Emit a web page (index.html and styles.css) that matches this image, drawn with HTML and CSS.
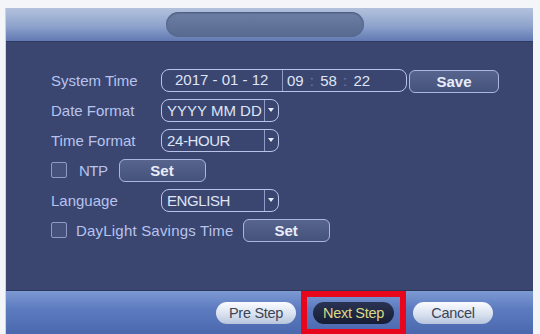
FILE: index.html
```html
<!DOCTYPE html>
<html lang="en">
<head>
    <meta charset="UTF-8">
    <meta name="viewport" content="width=device-width, initial-scale=1.0">
    <title>wizard - general</title>
    <link rel="stylesheet" href="styles.css">
</head>
<body>
    <div class="window">
        <div class="win_header">
            <div class="title_pill"></div>
        </div>
        <div class="win_body">
            <div class="row">
                <span class="label">System Time</span>
                <div class="field field_time">
                    <span class="date_part">2017 - 01 - 12</span>
                    <span class="time_part">09 <i>:</i> 58 <i>:</i> 22</span>
                </div>
                <span class="btn btn_save">Save</span>
            </div>
            <div class="row">
                <span class="label">Date Format</span>
                <div class="field select">
                    <span class="value wide">YYYY MM DD</span>
                    <span class="arrow"></span>
                </div>
            </div>
            <div class="row">
                <span class="label">Time Format</span>
                <div class="field select">
                    <span class="value">24-HOUR</span>
                    <span class="arrow"></span>
                </div>
            </div>
            <div class="row">
                <span class="check"></span>
                <span class="check_label">NTP</span>
                <span class="btn btn_set btn_ntp">Set</span>
            </div>
            <div class="row">
                <span class="label">Language</span>
                <div class="field select">
                    <span class="value">ENGLISH</span>
                    <span class="arrow"></span>
                </div>
            </div>
            <div class="row row_dst">
                <span class="check"></span>
                <span class="check_label">DayLight Savings Time</span>
                <span class="btn btn_set btn_dst">Set</span>
            </div>
        </div>
        <div class="win_footer">
            <span class="pill">Pre Step</span>
            <span class="highlight"><span class="pill pill_dark">Next Step</span></span>
            <span class="pill">Cancel</span>
        </div>
    </div>
</body>
</html>
```

FILE: styles.css
```css
*{
    padding: 0;
    margin: 0;
    box-sizing: border-box;
}

body{
    width: 540px;
    height: 334px;
    overflow: hidden;
    background: #f4f5f8;
    font-family: "Liberation Sans", Arial, sans-serif;
    font-size: 15px;
}

.window{
    margin: 8px 0 0 5px;
    width: 528px;
    height: 340px;
    display: flex;
    flex-direction: column;
    border-left: 1px solid #c9d3e6;
    background: #3b4670;
}

.win_header{
    height: 34px;
    display: flex;
    justify-content: center;
    align-items: center;
    background: linear-gradient(#b3c1dc, #8ea3cc 55%, #6279b3);
    border-bottom: 1px solid #2e3a63;
}

.title_pill{
    width: 198px;
    height: 25px;
    border-radius: 13px;
    background: linear-gradient(#6e7fa4, #56698f);
    box-shadow: inset 0 1px 2px #45557a;
    margin-left: -10px;
}

.win_body{
    height: 248px;
    padding: 27px 0 0 45px;
    display: flex;
    flex-direction: column;
    gap: 8px;
    background: #3a4670;
    color: #b8c3ee;
}

.row{
    display: flex;
    align-items: center;
    height: 22px;
}

.label{
    width: 110px;
}

.field{
    height: 23px;
    border: 1.5px solid #b9c3e9;
    border-radius: 8px;
    display: flex;
    align-items: center;
    color: #dfe4f7;
    overflow: hidden;
}

.field_time{
    width: 246px;
}

.date_part{
    width: 121px;
    padding-left: 13px;
    border-right: 1px solid #8f9bc8;
    height: 100%;
    line-height: 20px;
    white-space: nowrap;
}

.time_part{
    padding-left: 4px;
    white-space: nowrap;
}

.time_part i{
    font-style: normal;
    color: #6f7ba6;
    margin: 0 2px;
}

.select{
    width: 118px;
}

.select .value{
    flex: 1;
    padding-left: 5px;
    white-space: nowrap;
    overflow: hidden;
    letter-spacing: -0.4px;
}

.select .value.wide{
    letter-spacing: 0;
}

.select .arrow{
    width: 14px;
    flex: none;
    height: 100%;
    border-left: 1px solid #8f9bc8;
    position: relative;
}

.select .arrow::after{
    content: '';
    position: absolute;
    left: 3px;
    top: 8px;
    border-left: 3.5px solid transparent;
    border-right: 3.5px solid transparent;
    border-top: 4px solid #e6eaf8;
}

.btn{
    height: 23px;
    border: 1.5px solid #aab6e0;
    border-radius: 6px;
    background: linear-gradient(#56648e, #45527c);
    color: #e9ecf8;
    font-weight: bold;
    display: flex;
    align-items: center;
    justify-content: center;
}

.btn_save{
    width: 90px;
    margin-left: 2px;
    margin-top: 2px;
}

.btn_set{
    width: 87px;
}

.btn_ntp{
    margin-left: 11px;
}

.btn_dst{
    margin-left: 9px;
}

.check{
    width: 16px;
    height: 16px;
    border: 1.5px solid #8f9bc6;
    border-radius: 2px;
    background: #46527c;
}

.check_label{
    margin-left: 12px;
    letter-spacing: -0.5px;
}

.row_dst .check_label{
    margin-left: 9px;
    letter-spacing: 0.2px;
}

.win_footer{
    height: 44px;
    display: flex;
    align-items: center;
    padding-left: 210px;
    background: linear-gradient(#7e9ad3, #5d7cc0 40%, #4b68ae);
    border-top: 1px solid #2c375c;
}

.pill{
    width: 80px;
    height: 22px;
    border-radius: 11px;
    background: linear-gradient(#fbfcff, #d6dfee 60%, #b6c4dc);
    color: #3a4456;
    display: flex;
    align-items: center;
    justify-content: center;
    font-size: 14.5px;
    letter-spacing: -0.3px;
}

.highlight{
    margin: 0 7px 0 5px;
    width: 105px;
    height: 44px;
    border: 6px solid #e8061c;
    display: flex;
    align-items: center;
    justify-content: center;
}

.pill_dark{
    width: 81px;
    background: linear-gradient(#2a3352, #161d36);
    color: #dcd884;
}
```
